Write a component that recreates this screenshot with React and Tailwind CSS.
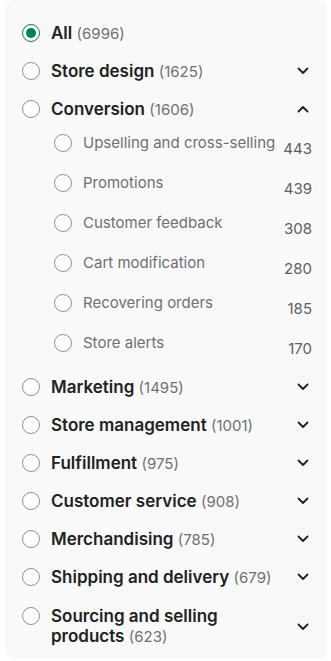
import React from "react";

const Radio = ({ checked, className = "" }) => (
  <span
    className={
      "flex h-[18px] w-[18px] shrink-0 items-center justify-center rounded-full border bg-white " +
      (checked ? "border-[#008060]" : "border-[#8c9196]") +
      " " +
      className
    }
  >
    {checked && <span className="h-[10px] w-[10px] rounded-full bg-[#008060]" />}
  </span>
);

const Chevron = ({ up }) => (
  <svg width="12" height="8" viewBox="0 0 12 8" className="shrink-0">
    <path
      d={up ? "M1.5 6.5 L6 2 L10.5 6.5" : "M1.5 1.5 L6 6 L10.5 1.5"}
      fill="none"
      stroke="#202223"
      strokeWidth="1.8"
      strokeLinecap="round"
      strokeLinejoin="round"
    />
  </svg>
);

const Top = ({ label, count, checked, chevron, up }) => (
  <div className="flex h-[38px] items-center">
    <Radio checked={checked} />
    <div className="ml-[11px] flex-1 text-[17px] font-semibold leading-[20px] text-[#202223]">
      {label}{" "}
      <span className="text-[15px] font-normal leading-[20px] text-[#6d7175]">({count})</span>
    </div>
    {chevron && (
      <div className="mr-[3px] flex w-[12px] justify-center">
        <Chevron up={up} />
      </div>
    )}
  </div>
);

const Sub = ({ label, count }) => (
  <div className="flex h-[30px] items-start pl-[32px]">
    <Radio className="mt-[1px]" />
    <div className="ml-[11px] flex-1 whitespace-nowrap text-[15px] leading-[20px] text-[#6d7175]">
      {label}
    </div>
    <div className="mt-[6px] text-[15px] leading-[20px] text-[#5c5f62]">{count}</div>
  </div>
);

const subs = [
  ["Upselling and cross-selling", 443],
  ["Promotions", 439],
  ["Customer feedback", 308],
  ["Cart modification", 280],
  ["Recovering orders", 185],
  ["Store alerts", 170],
];

const rest = [
  ["Marketing", 1495],
  ["Store management", 1001],
  ["Fulfillment", 975],
  ["Customer service", 908],
  ["Merchandising", 785],
  ["Shipping and delivery", 679],
];

export default function App() {
  return (
    <div
      className="h-[661px] w-[331px] bg-white"
      style={{ fontFamily: "Inter, 'Noto Sans', sans-serif" }}
    >
      <div className="ml-[5px] w-[322px] rounded-[8px] bg-[#f9f9f9] pb-[11px] pl-[17px] pr-[15px] pt-[14px]">
        <Top label="All" count={6996} checked />
        <Top label="Store design" count={1625} chevron />
        <Top label="Conversion" count={1606} chevron up />
        <div className="flex flex-col gap-[10px] pt-[5px]">
          {subs.map(([l, c]) => (
            <Sub key={l} label={l} count={c} />
          ))}
        </div>
        <div className="mt-[5px]">
          {rest.map(([l, c]) => (
            <Top key={l} label={l} count={c} chevron />
          ))}
        </div>
        <div className="flex items-center pt-[10px]">
          <div className="flex flex-1 items-start">
            <Radio className="mt-[1px]" />
            <div className="ml-[11px] w-[190px] text-[17px] font-semibold leading-[20px] text-[#202223]">
              Sourcing and selling products{" "}
              <span className="text-[15px] font-normal leading-[20px] text-[#6d7175]">(623)</span>
            </div>
          </div>
          <div className="mr-[3px] flex w-[12px] justify-center">
            <Chevron />
          </div>
        </div>
      </div>
    </div>
  );
}
